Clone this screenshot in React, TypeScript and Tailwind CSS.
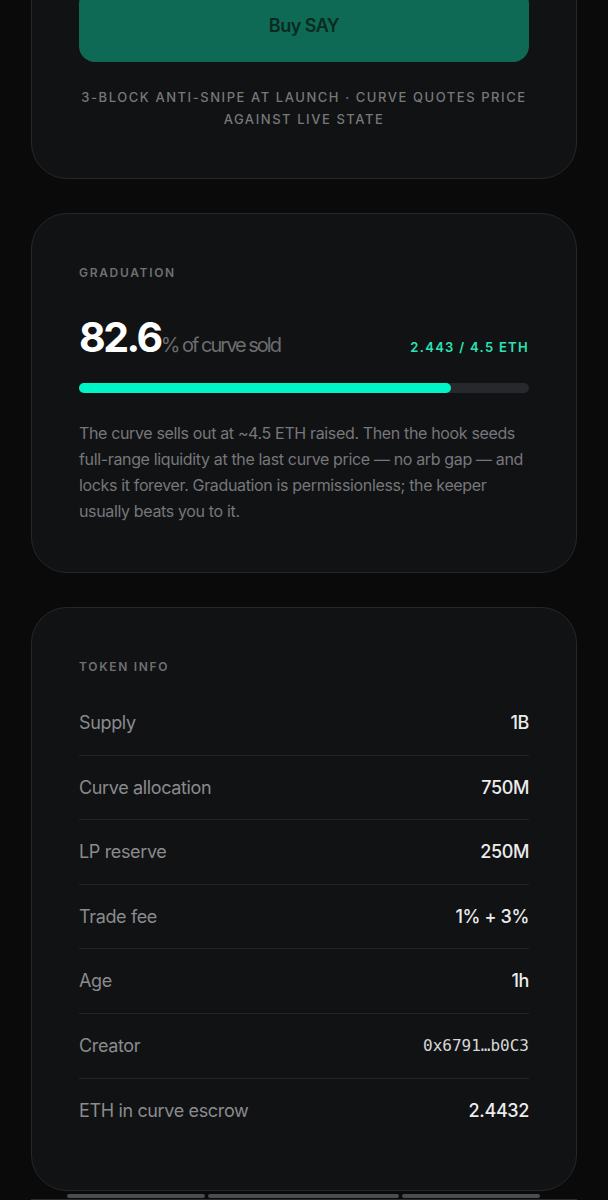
const FONT = "font-['Inter','Noto_Sans',sans-serif]"

const tokenInfo: { label: string; value: string; mono?: boolean }[] = [
  { label: 'Supply', value: '1B' },
  { label: 'Curve allocation', value: '750M' },
  { label: 'LP reserve', value: '250M' },
  { label: 'Trade fee', value: '1% + 3%' },
  { label: 'Age', value: '1h' },
  { label: 'Creator', value: '0x6791…b0C3', mono: true },
  { label: 'ETH in curve escrow', value: '2.4432' },
]

const SOLD_PCT = 82.6

function SectionLabel({ children }: { children: React.ReactNode }) {
  return (
    <p className="text-[12px] leading-[22px] font-semibold uppercase tracking-[0.14em] text-[#6f7072]">
      {children}
    </p>
  )
}

export default function App() {
  return (
    <div className={`min-h-[1200px] overflow-hidden bg-[#0a0a0a] px-[31px] ${FONT}`}>
      {/* Buy card (scrolled, top cut off) */}
      <section className="-mt-[61px] rounded-[36px] border border-[#26272a] bg-[#111214] px-[47px] pt-12 pb-12">
        <button className="flex h-[74px] w-full items-center justify-center rounded-[16px] bg-[#0e6a54] text-[18px] font-semibold tracking-[-0.03em] text-[#0a2a22]">
          Buy SAY
        </button>
        <p className="mt-6 text-center text-[13px] leading-[22px] font-medium uppercase tracking-[0.12em] text-[#77787a]">
          3-block anti-snipe at launch · curve quotes price against live state
        </p>
      </section>

      {/* Graduation */}
      <section className="mt-[34px] rounded-[36px] border border-[#26272a] bg-[#111214] px-[47px] pt-12 pb-12">
        <SectionLabel>Graduation</SectionLabel>
        <div className="mt-8 flex items-baseline justify-between">
          <p className="flex items-baseline">
            <span className="text-[41px] leading-[42px] font-bold tracking-[-0.06em] text-white">82.6</span>
            <span className="text-[20px] tracking-[-0.1em] text-[#6c6d70]">% of curve sold</span>
          </p>
          <span className="text-[13px] font-semibold tracking-[0.1em] text-[#2de3b6]">2.443 / 4.5 ETH</span>
        </div>
        <div className="mt-[23px] h-[10px] w-full rounded-full bg-[#27282b]">
          <div className="h-full rounded-full bg-[#00f5c6]" style={{ width: `${SOLD_PCT}%` }} />
        </div>
        <p className="mt-[27px] text-[16px] leading-[26px] tracking-[-0.022em] text-[#76777a]">
          The curve sells out at ~4.5 ETH raised. Then the hook seeds full-range liquidity at the last curve price — no arb gap — and locks it forever. Graduation is permissionless; the keeper usually beats you to it.
        </p>
      </section>

      {/* Token info */}
      <section className="mt-[34px] rounded-[36px] border border-[#26272a] bg-[#111214] px-[47px] pt-12 pb-12">
        <SectionLabel>Token info</SectionLabel>
        <div className="mt-[13px]">
          {tokenInfo.map((row, i) => (
            <div
              key={row.label}
              className={`flex items-center justify-between py-5 ${i > 0 ? 'border-t border-[#232427]' : ''}`}
            >
              <span className="text-[18px] leading-[23.6px] tracking-[-0.02em] text-[#8a8b8d]">{row.label}</span>
              {row.mono ? (
                <span className="font-['DejaVu_Sans_Mono',monospace] text-[16px] leading-[23.6px] text-[#d6d6d6]">
                  {row.value}
                </span>
              ) : (
                <span className="text-[18px] leading-[23.6px] font-medium tracking-[-0.02em] text-[#ececec]">
                  {row.value}
                </span>
              )}
            </div>
          ))}
        </div>
      </section>

      {/* Bottom tabs peeking in */}
      <div className="mt-[3px] flex gap-[3px] pl-[36px]">
        <div className="h-[4px] w-[138px] rounded-full bg-[#4b4c4e]" />
        <div className="h-[4px] w-[191px] rounded-full bg-[#4b4c4e]" />
        <div className="h-[4px] w-[138px] rounded-full bg-[#4b4c4e]" />
      </div>
      <div className="mt-px border-t border-[#2a2b2d]" />
    </div>
  )
}
